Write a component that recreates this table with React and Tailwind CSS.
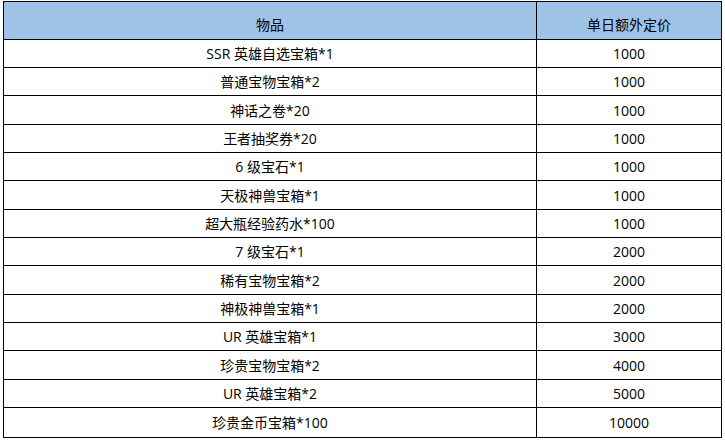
const ROWS = [
  ["SSR 英雄自选宝箱*1", "1000"],
  ["普通宝物宝箱*2", "1000"],
  ["神话之卷*20", "1000"],
  ["王者抽奖券*20", "1000"],
  ["6 级宝石*1", "1000"],
  ["天极神兽宝箱*1", "1000"],
  ["超大瓶经验药水*100", "1000"],
  ["7 级宝石*1", "2000"],
  ["稀有宝物宝箱*2", "2000"],
  ["神极神兽宝箱*1", "2000"],
  ["UR 英雄宝箱*1", "3000"],
  ["珍贵宝物宝箱*2", "4000"],
  ["UR 英雄宝箱*2", "5000"],
  ["珍贵金币宝箱*100", "10000"],
];

// rows with one extra pixel so the table ends where the reference does
const TALL = [2, 5, 8, 11, 13];

export default function App() {
  return (
    <div
      className="w-[725px] h-[441px] bg-white pt-px pl-[3px] text-[14px] text-black"
      style={{ fontFamily: '"Open Sans", "Noto Sans CJK SC", sans-serif' }}
    >
      <div className="w-[719px] border border-black">
        <div className="grid grid-cols-[533px_1fr] h-[38px] bg-[#9dc3e6] border-b border-black">
          <div className="border-r border-black flex items-end justify-center pb-[4px]">物品</div>
          <div className="flex items-end justify-center pb-[4px]">单日额外定价</div>
        </div>
        {ROWS.map(([item, price], i) => (
          <div
            key={i}
            className={`grid grid-cols-[533px_1fr] ${TALL.includes(i) ? "h-[29px]" : "h-[28px]"} ${
              i < ROWS.length - 1 ? "border-b border-black" : ""
            }`}
          >
            <div className="border-r border-black flex items-center justify-center">{item}</div>
            <div className="flex items-center justify-center">{price}</div>
          </div>
        ))}
      </div>
    </div>
  );
}
